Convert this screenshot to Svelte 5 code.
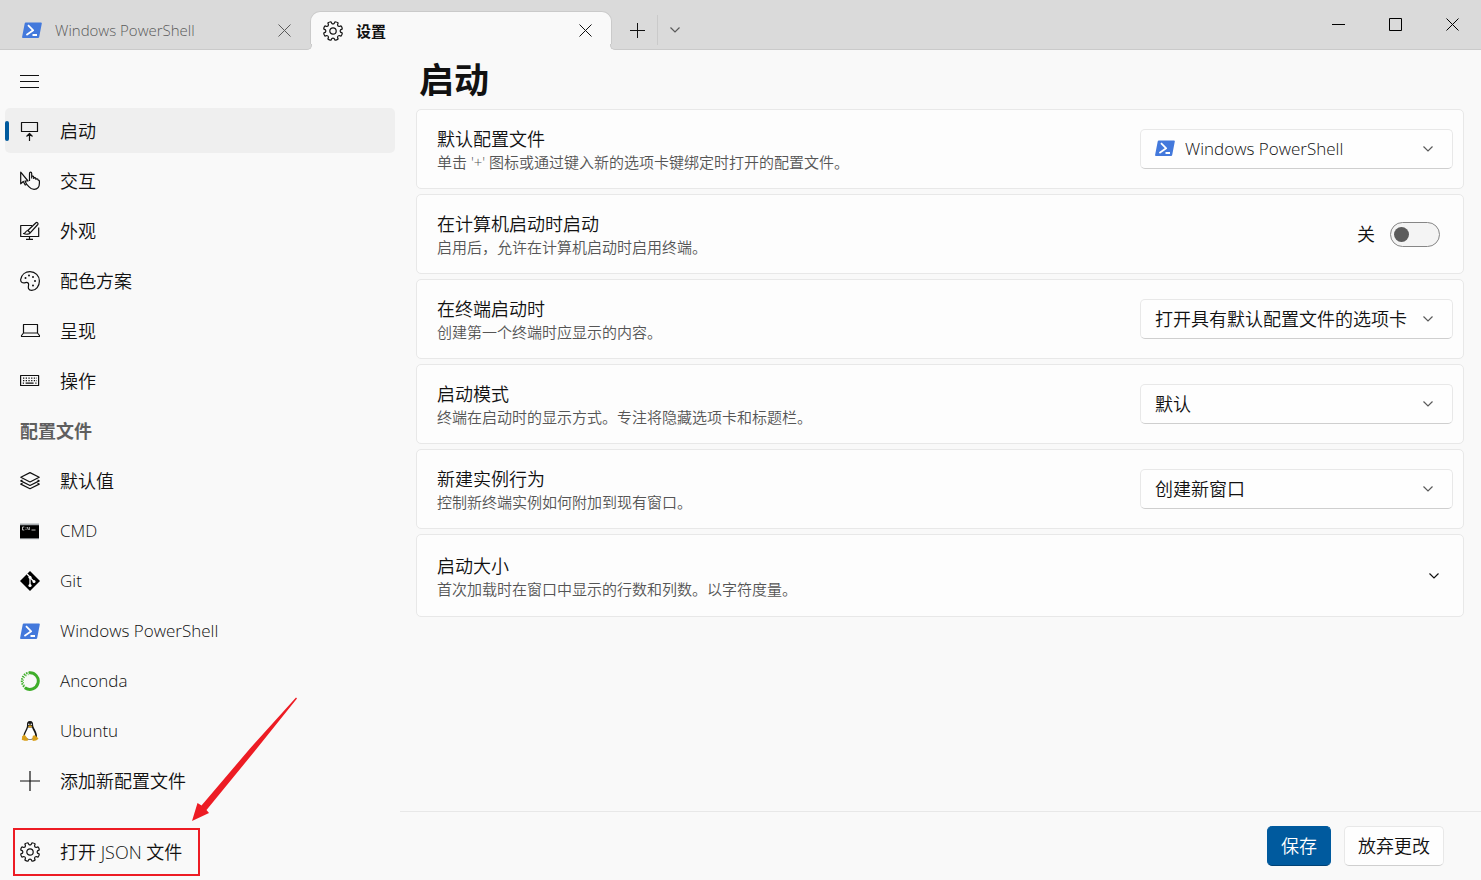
<script lang="ts">
  interface NavItem {
    icon: string;
    label: string;
  }

  interface Setting {
    id: string;
    title: string;
    description: string;
    options: string[];
    icon?: string;
  }

  const general: NavItem[] = [
    { icon: "startup", label: "启动" },
    { icon: "interaction", label: "交互" },
    { icon: "appearance", label: "外观" },
    { icon: "palette", label: "配色方案" },
    { icon: "laptop", label: "呈现" },
    { icon: "keyboard", label: "操作" },
  ];

  const profiles: NavItem[] = [
    { icon: "layers", label: "默认值" },
    { icon: "cmd", label: "CMD" },
    { icon: "git", label: "Git" },
    { icon: "powershell", label: "Windows PowerShell" },
    { icon: "anaconda", label: "Anconda" },
    { icon: "linux", label: "Ubuntu" },
    { icon: "add", label: "添加新配置文件" },
  ];

  const defaultProfile: Setting = {
    id: "default-profile",
    title: "默认配置文件",
    description: "单击 '+' 图标或通过键入新的选项卡键绑定时打开的配置文件。",
    options: ["Windows PowerShell", "CMD", "Git", "Anconda", "Ubuntu"],
    icon: "powershell",
  };

  const choices: Setting[] = [
    {
      id: "on-launch",
      title: "在终端启动时",
      description: "创建第一个终端时应显示的内容。",
      options: ["打开具有默认配置文件的选项卡"],
    },
    {
      id: "launch-mode",
      title: "启动模式",
      description: "终端在启动时的显示方式。专注将隐藏选项卡和标题栏。",
      options: ["默认"],
    },
    {
      id: "new-instance",
      title: "新建实例行为",
      description: "控制新终端实例如何附加到现有窗口。",
      options: ["创建新窗口"],
    },
  ];

  let selected = $state("启动");
  let launchOnLogin = $state(false);

  const isLatin = (text: string) => /^[\x20-\x7e]+$/.test(text);

  // eight teeth, with a notch at each compass point
  function gearPath() {
    const point = (r: number, deg: number) => {
      const a = (deg * Math.PI) / 180;
      return `${(10 + r * Math.cos(a)).toFixed(2)} ${(10 + r * Math.sin(a)).toFixed(2)}`;
    };
    let d = "";
    for (let i = 0; i < 8; i++) {
      const c = i * 45 + 22.5;
      d += `${i ? "L" : "M"}${point(7.6, c - 14)}L${point(9.5, c - 10)}`;
      d += `Q${point(10, c)} ${point(9.5, c + 10)}L${point(7.6, c + 14)}`;
      d += `Q${point(6.7, c + 22.5)} ${point(7.6, c + 31)}`;
    }
    return d + "Z";
  }

  const gear = gearPath();
</script>

{#snippet icon(name: string)}
  <svg class="icon" viewBox="0 0 20 20" aria-hidden="true">
    {#if name === "startup"}
      <path d="M1.500 1.500h16v9h-16zM9.500 20v-7.500M6.500 15.500l3-3 3 3" />
    {:else if name === "interaction"}
      <path d="M.7 1.200v11.600l2.600-2.300 1.900 3.500 1.400-.8-1.600-3.200H8z" />
      <path d="M9.500 10V2.400c0-1.600 2.200-1.600 2.200 0V7.500M11.700 7.500V5.700c.5-1 2-.8 2 .4v2M13.700 7.500c.3-1.200 2.100-1 2.100.3v1M15.800 8.500c.4-1 2.300-.8 2.300.6 1.600-.2 1.300 1.600 1.300 3.200 0 4-2.200 6-5.300 6-4 0-4.500-2.400-7.300-4.800" />
    {:else if name === "appearance"}
      <path d="M12 4.500H.7v11h18v-9M9.500 15.500V18M6 18.300h7" />
      <path d="M7.800 9.500 16 1.700c1-.9 2.700.7 1.800 1.800l-7.600 8.300zM7.800 9.500c-2.400.2-1.800 2.800-4.300 3 2.600 1.300 6.300.8 6.700-.7z" />
    {:else if name === "palette"}
      <path d="M.7 8.300C1.600 3.400 5.500.6 10 .6c5.300 0 9.400 4.200 9.400 9.300 0 5.200-3.300 9.500-7.700 9.500-3.600 0-3.600-2.800-3.200-4.800.5-2.400-.6-3.600-3-3-2.500.7-5.200.1-4.800-3.300z" />
      <g class="solid">
        <circle cx="5.500" cy="7" r="1" /><circle cx="9" cy="4.500" r="1" />
        <circle cx="13" cy="6" r="1" /><circle cx="15" cy="10" r="1" />
        <circle cx="13" cy="14.500" r="1" />
      </g>
    {:else if name === "laptop"}
      <path d="M3.500 12V3.500h14V12M3.500 12h14l2 2.500v1h-18v-1z" />
    {:else if name === "keyboard"}
      <path d="M.6 4.500h18v10H.6z" />
      <path stroke-dasharray="1.300 1.400" d="M3 7.200h14M3 9.600h14" />
      <path d="M2.800 12.200h1.200M5.600 12.200h8M15.300 12.200h1.200" />
    {:else if name === "layers"}
      <path d="M.8 6.300 10 1.600l9.200 4.700L10 11z" />
      <path d="M2.500 9 .8 9.900 10 14.500l9.200-4.600-1.700-.9M2.500 12.200l-1.700.9L10 17.700l9.200-4.600-1.700-.9" />
    {:else if name === "cmd"}
      <g class="solid">
        <path fill="#000" d="M0 3h19v15H0z" />
        <path fill="#a6abb0" d="M0 2.500h19v1.800H0zM0 17.300h19v.9H0z" />
      </g>
      <path stroke="#ccc" stroke-width=".9" d="M4.300 6H2.500v3h1.800M6 6.500v.8M6 8.200V9M7.200 6l1.200 3M9.300 6v3M11.500 9h4" />
    {:else if name === "git"}
      <path class="solid" fill="#000" d="M10 0l10 10-10 10L0 10z" />
      <path stroke="#fff" stroke-width="1.300" d="M7 3l3 3v8.500M10 6.500l4 4" />
      <g class="solid" fill="#fff">
        <circle cx="10" cy="6.300" r="1.500" /><circle cx="14" cy="10.400" r="1.500" />
        <circle cx="10" cy="14.500" r="1.600" />
      </g>
    {:else if name === "powershell"}
      <path class="solid" fill="#4379dc" d="M3.800 2.500h15.200q1 0 .8 1l-2.600 13.400q-.2 1-1.200 1H.9q-1 0-.8-1L2.700 3.500q.2-1 1.100-1z" />
      <path stroke="#fff" stroke-width="1.800" d="M6 5.200l5.200 5.100-6.800 4.600M10.500 15h4.500" />
    {:else if name === "anaconda"}
      <path stroke="#3fae2a" stroke-width="3" d="M9 1.800a8.300 8.300 0 1 1-4 14.900" />
      <path stroke="#3fae2a" stroke-width="2" stroke-dasharray="1.500 1" d="M6 17.300A8.500 8.500 0 0 1 9.500 1.500" />
      <path stroke="#3fae2a" stroke-dasharray="1 1.600" d="M4.500 14.500A7 7 0 0 1 8.500 3.500" />
    {:else if name === "linux"}
      <g class="solid">
        <path fill="#161616" d="M10 0c2.600 0 3.200 1.800 3.100 4 0 2.500 3.900 6.500 3.900 11 0 2.500-3 3.500-7 3.500S3.500 17.500 3.500 15c0-3.800 3.500-7 3.500-10.500C6.800 2 7.400 0 10 0z" />
        <path fill="#fff" d="M8 6.500h4c.8 2.800 3.200 5 3.200 8 0 2.500-2.400 3.500-5.200 3.500s-5.100-1-5.100-3.500C4.900 12 7.200 9.800 8 6.500z" />
        <circle fill="#ddd" cx="8.800" cy="3.400" r=".8" /><circle fill="#ddd" cx="11.300" cy="3.400" r=".8" />
        <path fill="#d9a01c" d="M7.800 5.200 10 4.200l2.500 1L10 7zM4.500 13.500l3.700 4.700c.4 1.600-1.400 2.300-6.200.8-.6-.8.300-1.500 0-3.400zM15 14.300l3.300 3c.4 1.300-4 3-5.400 2.500-1.200-.5-.4-3.300 0-5z" />
      </g>
    {:else if name === "add"}
      <path d="M10 0v20M0 10h20" />
    {:else if name === "gear"}
      <path d={gear} />
      <circle cx="10" cy="10" r="3.200" />
    {/if}
  </svg>
{/snippet}

{#snippet cross()}
  <svg class="cross" viewBox="0 0 13 13" aria-hidden="true">
    <path d="M.5.5l12 12M12.500.5l-12 12" />
  </svg>
{/snippet}

{#snippet chevron()}
  <svg class="chevron" viewBox="0 0 10 6" aria-hidden="true">
    <path d="M.5.5L5 5 9.500.5" />
  </svg>
{/snippet}

{#snippet navButton(item: NavItem)}
  <li>
    <button
      class="nav-item"
      class:selected={selected === item.label}
      class:latin={isLatin(item.label)}
      onclick={() => (selected = item.label)}
    >
      {@render icon(item.icon)}
      {item.label}
    </button>
  </li>
{/snippet}

{#snippet selectCard(setting: Setting)}
  <section class="card">
    <div class="text">
      <label for={setting.id}>{setting.title}</label>
      <p>{setting.description}</p>
    </div>
    <div class="select" class:with-icon={setting.icon}>
      {#if setting.icon}
        {@render icon(setting.icon)}
      {/if}
      <select id={setting.id} class:latin={isLatin(setting.options[0])}>
        {#each setting.options as option}
          <option>{option}</option>
        {/each}
      </select>
      {@render chevron()}
    </div>
  </section>
{/snippet}

<div class="window">
  <header class="titlebar">
    <div class="tab">
      {@render icon("powershell")}
      <span class="tab-title">Windows PowerShell</span>
      <button class="tab-close" aria-label="关闭">{@render cross()}</button>
    </div>
    <div class="tab active">
      {@render icon("gear")}
      <span class="tab-title">设置</span>
      <button class="tab-close" aria-label="关闭">{@render cross()}</button>
    </div>
    <button class="new-tab" aria-label="新建标签页">
      <svg viewBox="0 0 15 15" aria-hidden="true"><path d="M7.500 0v15M0 7.500h15" /></svg>
    </button>
    <button class="tab-menu" aria-label="更多">{@render chevron()}</button>
    <div class="controls">
      <button aria-label="最小化">
        <svg viewBox="0 0 13 13" aria-hidden="true"><path d="M0 6.500h13" /></svg>
      </button>
      <button aria-label="最大化">
        <svg viewBox="0 0 13 13" aria-hidden="true"><path d="M.5.5h12v12H.5z" /></svg>
      </button>
      <button aria-label="关闭窗口">{@render cross()}</button>
    </div>
  </header>

  <div class="body">
    <nav class="sidebar">
      <button class="menu" aria-label="菜单">
        <svg viewBox="0 0 19 13" aria-hidden="true"><path d="M0 .5h19M0 6.500h19M0 12.500h19" /></svg>
      </button>
      <ul>
        {#each general as item}
          {@render navButton(item)}
        {/each}
      </ul>
      <h2>配置文件</h2>
      <ul>
        {#each profiles as item}
          {@render navButton(item)}
        {/each}
      </ul>
      <div class="json">
        <button class="nav-item">
          {@render icon("gear")}
          打开 JSON 文件
        </button>
        <div class="marker"></div>
        <svg class="arrow" viewBox="0 0 106 124" aria-hidden="true">
          <path d="M104 .5L58 51.500 9.500 108.500l-4-2.500L0 124l17-8-2.500-3L62 55l43-53.500z" />
        </svg>
      </div>
    </nav>

    <main>
      <div class="content">
        <h1>启动</h1>
        {@render selectCard(defaultProfile)}
        <section class="card">
          <div class="text">
            <label for="launch-on-login">在计算机启动时启动</label>
            <p>启用后，允许在计算机启动时启用终端。</p>
          </div>
          <div class="toggle">
            <span>{launchOnLogin ? "开" : "关"}</span>
            <input id="launch-on-login" type="checkbox" role="switch" bind:checked={launchOnLogin} />
          </div>
        </section>
        {#each choices as setting}
          {@render selectCard(setting)}
        {/each}
        <button class="card expander">
          <span class="text">
            <span class="title">启动大小</span>
            <span class="description">首次加载时在窗口中显示的行数和列数。以字符度量。</span>
          </span>
          {@render chevron()}
        </button>
      </div>
      <footer>
        <button class="save">保存</button>
        <button class="discard">放弃更改</button>
      </footer>
    </main>
  </div>
</div>

<style>
  :global(body) {
    margin: 0;
    background: #f9f9f9;
  }

  .window {
    display: flex;
    flex-direction: column;
    min-height: 100vh;
    color: #111;
    font-family: "Open Sans", "Noto Sans CJK SC", sans-serif;
    font-size: 18px;
    font-weight: 350;
    line-height: 24px;
  }

  .window * {
    box-sizing: border-box;
  }

  button,
  select {
    padding: 0;
    border: 0;
    background: none;
    color: inherit;
    font: inherit;
  }

  svg {
    display: block;
    flex: none;
    fill: none;
    stroke: currentColor;
  }

  .icon {
    width: 20px;
    height: 20px;
    stroke-width: 1.2;
    stroke-linejoin: round;
  }

  .solid {
    stroke: none;
  }

  .solid:not([fill]) {
    fill: currentColor;
  }

  .cross {
    width: 13px;
    height: 13px;
  }

  .chevron {
    width: 10px;
    height: 6px;
    stroke-width: 1.2;
  }

  .latin {
    font-size: 17px;
  }

  .titlebar {
    display: flex;
    align-items: flex-end;
    height: 50px;
    background: #dadada;
    box-shadow: inset 0 -1px #cacaca;
  }

  .tab {
    display: flex;
    align-items: center;
    width: 302px;
    height: 39px;
    padding: 0 13px 1px 12px;
    gap: 13px;
    color: #5a5a5a;
    font-size: 15px;
  }

  .tab:first-child {
    width: 310px;
    padding-left: 22px;
  }

  .tab-title {
    flex: 1;
  }

  .tab-close {
    display: grid;
    place-items: center;
    width: 26px;
    height: 26px;
  }

  .active {
    position: relative;
    border: 1px solid #cacaca;
    border-bottom: 0;
    border-radius: 10px 10px 0 0;
    background: #f9f9f9;
    color: #111;
    font-weight: 700;
  }

  .active::before,
  .active::after {
    content: "";
    position: absolute;
    bottom: 0;
    width: 5px;
    height: 5px;
    border-bottom: 1px solid #cacaca;
    background: #dadada;
    box-shadow: 0 2px #f9f9f9;
  }

  .active::before {
    left: -5px;
    border-right: 1px solid #cacaca;
    border-bottom-right-radius: 5px;
  }

  .active::after {
    right: -5px;
    border-left: 1px solid #cacaca;
    border-bottom-left-radius: 5px;
  }

  .new-tab,
  .tab-menu {
    display: grid;
    place-items: center;
    height: 30px;
    margin-bottom: 5px;
  }

  .new-tab {
    width: 46px;
    padding-left: 5px;
    border-right: 1px solid #cacaca;
  }

  .new-tab svg {
    width: 15px;
    height: 15px;
  }

  .tab-menu {
    width: 34px;
    color: #5a5a5a;
  }

  .controls {
    display: flex;
    align-self: flex-start;
    margin-left: auto;
    color: #000;
  }

  .controls button {
    display: grid;
    place-items: center;
    width: 57px;
    height: 49px;
  }

  .controls svg {
    width: 13px;
    height: 13px;
  }

  .body {
    display: flex;
    flex: 1;
  }

  .sidebar {
    display: flex;
    flex-direction: column;
    flex: none;
    width: 400px;
    padding: 8px 5px 6px;
  }

  .menu {
    display: grid;
    place-items: center;
    width: 49px;
    height: 47px;
    margin-bottom: 3px;
  }

  .menu svg {
    width: 19px;
    height: 13px;
  }

  ul {
    margin: 0;
    padding: 0;
    list-style: none;
  }

  li {
    margin-bottom: 5px;
  }

  .nav-item {
    position: relative;
    display: flex;
    align-items: center;
    gap: 20px;
    width: 100%;
    height: 45px;
    padding: 0 15px;
    border-radius: 5px;
    text-align: left;
  }

  .selected {
    background: #efefef;
  }

  .selected::before {
    content: "";
    position: absolute;
    left: 0;
    width: 4px;
    height: 20px;
    border-radius: 2px;
    background: #005a9e;
  }

  h2 {
    height: 50px;
    margin: 0;
    padding-left: 15px;
    color: #5f5f5f;
    font-size: 18px;
    font-weight: 700;
    line-height: 46px;
  }

  .json {
    position: relative;
    margin-top: auto;
  }

  .marker {
    position: absolute;
    inset: -1px auto -2px 8px;
    width: 187px;
    border: 2px solid #ed1c24;
    pointer-events: none;
  }

  .arrow {
    position: absolute;
    bottom: 53px;
    left: 187px;
    width: 106px;
    height: 124px;
    fill: #ed1c24;
    stroke: none;
    pointer-events: none;
  }

  main {
    display: flex;
    flex-direction: column;
    flex: 1;
    min-width: 0;
  }

  .content {
    display: flex;
    flex-direction: column;
    flex: 1;
    gap: 5px;
    padding: 5px 17px 16px 16px;
  }

  h1 {
    margin: 0;
    padding-left: 3px;
    font-size: 35px;
    font-weight: 700;
    line-height: 49px;
  }

  .card {
    display: flex;
    align-items: center;
    justify-content: space-between;
    min-height: 80px;
    padding: 0 10px 0 20px;
    border: 1px solid #e8e8e8;
    border-radius: 5px;
    background: #fdfdfd;
    text-align: left;
  }

  .text {
    display: flex;
    flex-direction: column;
    padding-top: 2px;
  }

  .text p,
  .description {
    margin: 0;
    color: #555;
    font-size: 15px;
    line-height: 22px;
  }

  .select {
    position: relative;
    width: 313px;
  }

  .select select {
    width: 100%;
    height: 40px;
    padding: 0 40px 0 14px;
    border: 1px solid #e8e8e8;
    border-bottom-color: #cfcfcf;
    border-radius: 5px;
    background: #fefefe;
    appearance: none;
  }

  .with-icon select {
    padding-left: 44px;
  }

  .select .icon {
    position: absolute;
    top: 9px;
    left: 15px;
  }

  .select .chevron {
    position: absolute;
    top: 17px;
    right: 20px;
    color: #5a5a5a;
    pointer-events: none;
  }

  .toggle {
    display: flex;
    align-items: center;
    gap: 15px;
    padding-right: 13px;
  }

  .toggle input {
    display: flex;
    align-items: center;
    width: 50px;
    height: 25px;
    margin: 0;
    padding: 0 3px;
    border: 1px solid #868686;
    border-radius: 13px;
    background: #f4f4f4;
    appearance: none;
  }

  .toggle input::before {
    content: "";
    width: 15px;
    height: 15px;
    border-radius: 50%;
    background: #5c5c5c;
  }

  .toggle input:checked {
    justify-content: flex-end;
    border-color: #005a9e;
    background: #005a9e;
  }

  .toggle input:checked::before {
    background: #fff;
  }

  .expander {
    min-height: 83px;
    padding-right: 24px;
  }

  footer {
    display: flex;
    justify-content: flex-end;
    gap: 13px;
    padding: 14px 37px;
    border-top: 1px solid #e8e8e8;
  }

  footer button {
    height: 40px;
    padding: 0 13px;
    border: 1px solid #e8e8e8;
    border-bottom-color: #cfcfcf;
    border-radius: 5px;
    background: #fefefe;
  }

  footer .save {
    border-color: #005a9e;
    border-bottom-color: #004275;
    background: #005a9e;
    color: #fff;
  }
</style>
